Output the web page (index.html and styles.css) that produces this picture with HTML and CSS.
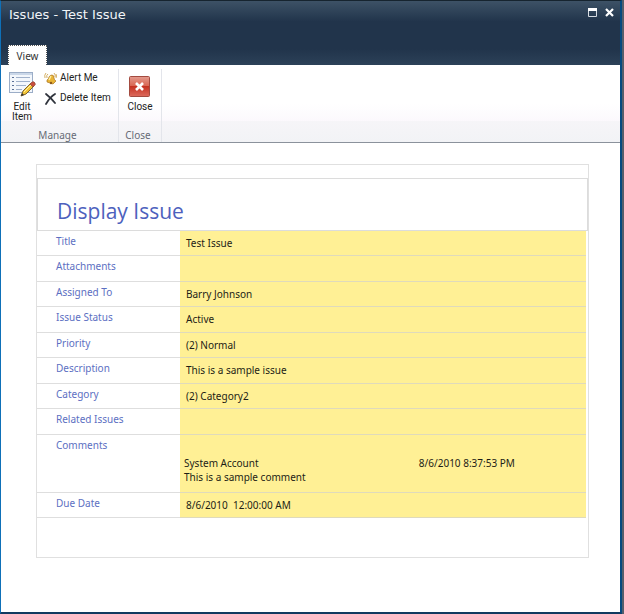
FILE: index.html
```html
<!DOCTYPE html>
<html lang="en">
<head>
<meta charset="utf-8">
<title>Issues - Test Issue</title>
<link rel="stylesheet" href="styles.css">
</head>
<body>
<div class="dialog">
  <header class="titlebar">
    <div class="caption">
      <h1>Issues - Test Issue</h1>
      <div class="window-buttons">
        <button type="button" aria-label="Maximize"><svg width="9" height="9" viewBox="0 0 9 9"><path d="M.5 1.500h8v7h-8z" fill="none" stroke="#d6dce2"/><path d="M0 0h9v3H0z" fill="#fff"/></svg></button>
        <button type="button" aria-label="Close dialog"><svg width="9" height="9" viewBox="0 0 9 9"><path d="M1 1l7 7M8 1L1 8" stroke="#fff" stroke-width="2.2"/></svg></button>
      </div>
    </div>
    <nav class="tabs"><button type="button" class="tab">View</button></nav>
  </header>

  <div class="ribbon">
    <section class="group manage">
      <div class="actions">
        <button type="button" class="large">
          <svg width="28" height="28" viewBox="0 0 28 28">
            <rect x="1.500" y="3.500" width="23" height="20" fill="#f3f7fc" stroke="#9badc7"/>
            <path d="M2 4h22v2H2z" fill="#cbd8e9"/>
            <path d="M4 8.500h2M4 12.500h2M4 16.500h2M4 20.500h2" stroke="#5a7097"/>
            <path d="M8 8.500h14M8 12.500h14M8 16.500h10M8 20.500h6" stroke="#a0b1cb"/>
            <path d="M13 27l2-5L23 14l3 3-8 8z" fill="#f3c637" stroke="#80642b"/>
            <path d="M16 23l8-8" stroke="#fff0a1"/>
            <path d="M22 15l2-2q2-1 3 1t-1 3l-1 1z" fill="#c94e3d" stroke="#8f4b3a" stroke-width=".7"/>
            <path d="M13 27l1-3 2 2z" fill="#333"/>
          </svg>
          <span>Edit<br>Item</span>
        </button>
        <div class="small-actions">
          <button type="button" class="small">
            <svg width="13" height="13" viewBox="0 0 13 13">
              <path d="M2 1Q0 3 1 6M4 2Q2 3 3 6M12 2q1 2 0 4M10 1q2 2 1 4" fill="none" stroke="#d3ad61"/>
              <path d="M3 8q2-1 2-3 1-2 3-2t2 3q0 2 2 3l-3 3-6-2z" fill="#e9b435" stroke="#a77222" stroke-width=".7"/>
              <path d="M7 4q-1 2-2 4" fill="none" stroke="#fff0a2" stroke-width="1.400"/>
              <circle cx="7" cy="11" r="1.200" fill="#8d5a1c"/>
            </svg>
            <span>Alert Me</span>
          </button>
          <button type="button" class="small">
            <svg width="13" height="13" viewBox="0 0 13 13"><path d="M2 2q5 4 9 9M11 2Q6 5 2 12" fill="none" stroke="#30343d" stroke-width="1.800" stroke-linecap="round"/></svg>
            <span>Delete Item</span>
          </button>
        </div>
      </div>
      <h2>Manage</h2>
    </section>
    <section class="group closing">
      <div class="actions">
        <button type="button" class="large">
          <svg width="28" height="28" viewBox="0 0 28 28">
            <defs><linearGradient id="red" x2="0" y2="1"><stop stop-color="#e39b8e"/><stop offset=".48" stop-color="#d96552"/><stop offset=".5" stop-color="#c53222"/><stop offset="1" stop-color="#dc6b5d"/></linearGradient></defs>
            <rect x="3.500" y="7.500" width="20" height="20" rx="1" fill="url(#red)" stroke="#a34b40"/>
            <path d="M10 14l7 7M17 14l-7 7" stroke="#fff" stroke-width="2.600"/>
          </svg>
          <span>Close</span>
        </button>
      </div>
      <h2>Close</h2>
    </section>
  </div>

  <main>
    <article class="form">
      <h2 class="form-title">Display Issue</h2>
      <table>
        <tbody>
          <tr><th scope="row">Title</th><td>Test Issue</td></tr>
          <tr><th scope="row">Attachments</th><td></td></tr>
          <tr><th scope="row">Assigned To</th><td>Barry Johnson</td></tr>
          <tr><th scope="row">Issue Status</th><td>Active</td></tr>
          <tr><th scope="row">Priority</th><td>(2) Normal</td></tr>
          <tr><th scope="row">Description</th><td>This is a sample issue</td></tr>
          <tr><th scope="row">Category</th><td>(2) Category2</td></tr>
          <tr><th scope="row">Related Issues</th><td></td></tr>
          <tr class="comments"><th scope="row">Comments</th><td>
            <div class="comment-head"><span>System Account</span><time>8/6/2010 8:37:53 PM</time></div>
            <div>This is a sample comment</div>
          </td></tr>
          <tr><th scope="row">Due Date</th><td>8/6/2010 &nbsp;12:00:00 AM</td></tr>
        </tbody>
      </table>
    </article>
  </main>
</div>
</body>
</html>
```
FILE: styles.css
```css
* { box-sizing: border-box; }

body {
  margin: 0;
  min-height: 100vh;
  display: flex;
  padding: 0 2px 1px 0;
  background: #555e6b;
  font-family: "Noto Sans", "Open Sans", sans-serif;
  font-size: 10px;
  color: #222;
}

h1, h2 { margin: 0; font-weight: normal; }

button {
  border: 0;
  padding: 0;
  background: none;
  color: inherit;
  font: inherit;
}

svg { display: block; flex: none; }

.dialog {
  flex: 1;
  background: #fff;
  border: 1px solid #0e70b8;
  border-top-color: #16242f;
  border-right: 2px solid #064a80;
  border-bottom: 2px solid #123a60;
}

.titlebar {
  height: 64px;
  display: flex;
  flex-direction: column;
  justify-content: space-between;
  background: linear-gradient(#3d5266, #21344b 32%, #21344b 75%, #2c4158);
}

.caption {
  display: flex;
  justify-content: space-between;
  padding: 6px 6px 0 8px;
}

.caption h1 {
  font: 13px/16px "DejaVu Sans", sans-serif;
  color: #f2f5f8;
}

.window-buttons { display: flex; gap: 8px; height: 10px; }

.tabs { display: flex; padding-left: 7px; }

.tab {
  width: 39px;
  height: 20px;
  background: #fff;
  border: 1px dotted #555;
  border-bottom: 0;
  color: #333;
}

.ribbon {
  display: flex;
  height: 78px;
  border-bottom: 1px solid #8b929c;
  background: linear-gradient(#fff 50%, #fcf9fd 72%, #f6f5f8 73%, #f2f3f6);
}

.group {
  display: flex;
  flex-direction: column;
  justify-content: space-between;
  margin: 4px 0 0;
  border-right: 1px solid #e3e5eb;
}

.manage { width: 118px; }
.closing { width: 43px; }

.group h2 {
  padding-right: 4px;
  font-size: 10px;
  line-height: 14px;
  text-align: center;
  color: #666b75;
}

.actions { display: flex; gap: 1px; }

.large {
  display: flex;
  flex-direction: column;
  align-items: center;
  width: 42px;
  gap: 5px;
  font-family: Roboto, sans-serif;
  line-height: 10px;
}

.small-actions {
  display: flex;
  flex-direction: column;
  gap: 6px;
  padding-top: 2px;
}

.small {
  display: flex;
  align-items: center;
  gap: 3px;
  font-family: Roboto, sans-serif;
  line-height: 14px;
  white-space: nowrap;
}

main { padding: 21px 31px 54px 35px; }

.form {
  padding: 13px 0 39px;
  border: 1px solid #e0e0e0;
}

.form-title {
  height: 53px;
  padding: 16px 19px 0;
  border: 1px solid #dcdcdc;
  font-family: "Open Sans", sans-serif;
  font-size: 21px;
  line-height: 32px;
  color: #4d61bd;
}

table {
  width: calc(100% - 2px);
  height: 287px;
  border-collapse: separate;
  border-spacing: 0;
  line-height: 14px;
}

th, td {
  padding: 3px 6px;
  vertical-align: top;
  text-align: left;
  border-bottom: 1px solid #dedede;
}

th {
  width: 143px;
  padding-left: 19px;
  font-weight: normal;
  color: #5c6fc2;
}

td {
  padding-top: 5px;
  padding-bottom: 1px;
  background: #fff095;
  border-bottom-color: #dfdabc;
  color: #1d1d16;
}

.comments { height: 58px; }
.comments td { padding: 21px 4px 0; }

.comment-head { display: flex; }
.comment-head span { flex: 0 0 59%; }
```
